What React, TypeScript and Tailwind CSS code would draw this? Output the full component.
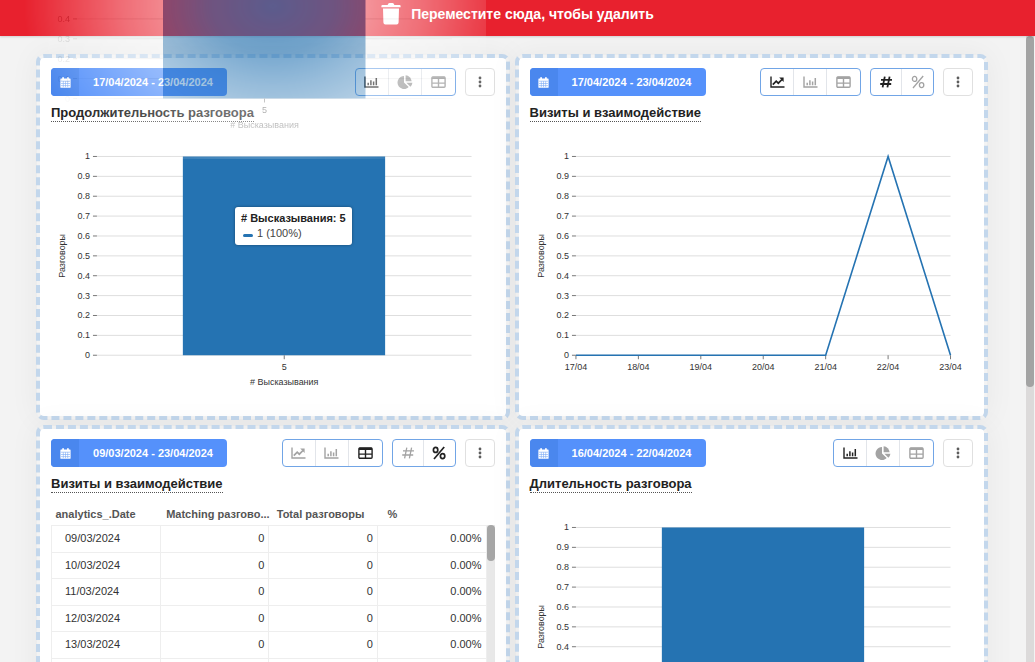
import React from "react";

type ViewKind = "line" | "bar" | "pie" | "table";
type Unit = "number" | "percent";

const LineIcon = () => (
  <svg viewBox="0 0 15 12" className="h-3 w-[15px]" fill="none" stroke="currentColor">
    <path d="M1 .5V11H14.5" strokeWidth="1.4" />
    <path d="M2.8 8.6 6.2 5.2 8.3 7.2 12 3.5" strokeWidth="1.7" />
    <path d="M9.2 1.6H13.6V6Z" fill="currentColor" stroke="none" />
  </svg>
);

const BarIcon = () => (
  <svg viewBox="0 0 15 12" className="h-3 w-[15px]" fill="none" stroke="currentColor">
    <path d="M1 .5V11H14.5" strokeWidth="1.4" />
    <path d="M4.2 9.2V6.8M6.9 9.2V4.2M9.6 9.2V5.4M12.3 9.2V2" strokeWidth="1.5" />
  </svg>
);

const PieIcon = () => (
  <svg viewBox="0 0 16 14" className="h-3.5 w-4" fill="currentColor">
    <path d="M7 1V7.5L11.7 12A6.5 6.5 0 1 1 7 1Z" />
    <path d="M8.6.3A6.3 6.3 0 0 1 14.6 6.3H8.6Z" />
    <path d="M9.4 7.8H15.4A6.3 6.3 0 0 1 13.4 11.8Z" />
  </svg>
);

const TableIcon = () => (
  <svg viewBox="0 0 15 12" className="h-3 w-[15px]" fill="none" stroke="currentColor">
    <rect x=".9" y=".9" width="13.2" height="10.4" rx="1" strokeWidth="1.4" />
    <path d="M1 1.8H14" strokeWidth="2.2" />
    <path d="M7.5 2V11M1 7.1H14" strokeWidth="1.4" />
  </svg>
);

const CalendarIcon = () => (
  <svg viewBox="0 0 11 11" className="h-[11px] w-[11px]">
    <path
      d="M1 1.6H2.2V.3H4V1.6H7V.3H8.8V1.6H10Q10.6 1.6 10.6 2.2V10.2Q10.6 10.8 10 10.8H1Q.4 10.8.4 10.2V2.2Q.4 1.6 1 1.6Z"
      fill="#fff"
    />
    <path d="M1 4.2H10M1 6.5H10M1 8.6H10M3.3 4.2V10.2M5.5 4.2V10.2M7.7 4.2V10.2" stroke="#7aa9f5" strokeWidth=".6" />
  </svg>
);

const HashIcon = ({ bold }: { bold: boolean }) => (
  <svg viewBox="0 0 14 14" className="h-3.5 w-3.5" fill="none" stroke="currentColor" strokeWidth={bold ? 1.8 : 1.3}>
    <path d="M5.8 1.6 3.6 12.4M10.6 1.6 8.4 12.4M2 4.8h11M1.2 9h11" />
  </svg>
);

const PercentIcon = ({ bold }: { bold: boolean }) => (
  <svg viewBox="0 0 14 14" className="h-3.5 w-3.5" fill="none" stroke="currentColor" strokeWidth={bold ? 1.7 : 1.3}>
    <ellipse cx="3.6" cy="3.9" rx="2.2" ry="2.5" />
    <ellipse cx="10.6" cy="10.1" rx="2.2" ry="2.5" />
    <path d="M12.2 1 2 13" />
  </svg>
);

const DotsIcon = () => (
  <svg viewBox="0 0 4 12" className="h-3 w-1" fill="currentColor">
    <circle cx="2" cy="2" r="1.4" />
    <circle cx="2" cy="6" r="1.4" />
    <circle cx="2" cy="10" r="1.4" />
  </svg>
);

const TrashIcon = () => (
  <svg viewBox="0 0 20 22" className="h-[22px] w-5" fill="currentColor">
    <path d="M1.4 2H6.6L7.4.6Q7.8 0 8.5 0h3Q12.2 0 12.6.6L13.4 2h5.2Q19.6 2 19.6 3v1.3H.4V3Q.4 2 1.4 2ZM2 5.4H18L17.6 19.5Q17.5 21.5 15.6 21.5H4.4Q2.5 21.5 2.4 19.5Z" />
  </svg>
);

const viewIcons: Record<ViewKind, { label: string; icon: React.ReactNode }> = {
  line: { label: "Линейный график", icon: <LineIcon /> },
  bar: { label: "Гистограмма", icon: <BarIcon /> },
  pie: { label: "Круговая диаграмма", icon: <PieIcon /> },
  table: { label: "Таблица", icon: <TableIcon /> },
};

const groupClass = "flex h-7 divide-x divide-[#e2e5ea] overflow-hidden rounded-[4px] border border-[#71a5e6] bg-white";

function ViewSwitch({ views, active }: { views: ViewKind[]; active: ViewKind }) {
  return (
    <div className={groupClass}>
      {views.map((v) => (
        <button
          key={v}
          aria-label={viewIcons[v].label}
          aria-pressed={v === active}
          className={
            v === active
              ? "flex w-[33px] items-center justify-center text-[#222]"
              : "flex w-[33px] items-center justify-center text-[#a3a3a3]"
          }
        >
          {viewIcons[v].icon}
        </button>
      ))}
    </div>
  );
}

function UnitSwitch({ active }: { active: Unit }) {
  return (
    <div className={groupClass}>
      <button
        aria-label="Количество"
        aria-pressed={active === "number"}
        className={
          active === "number"
            ? "flex w-[31px] items-center justify-center text-[#222]"
            : "flex w-[31px] items-center justify-center text-[#a3a3a3]"
        }
      >
        <HashIcon bold={active === "number"} />
      </button>
      <button
        aria-label="Проценты"
        aria-pressed={active === "percent"}
        className={
          active === "percent"
            ? "flex w-[31px] items-center justify-center text-[#222]"
            : "flex w-[31px] items-center justify-center text-[#a3a3a3]"
        }
      >
        <PercentIcon bold={active === "percent"} />
      </button>
    </div>
  );
}

type CardProps = {
  range: string;
  title: string;
  views: ViewKind[];
  active: ViewKind;
  unit?: Unit;
  children: React.ReactNode;
};

function Card({ range, title, views, active, unit, children }: CardProps) {
  return (
    <section className="flex h-[366px] min-w-0 flex-col rounded-lg border-4 border-dashed border-[#c3d7ec] bg-white bg-clip-padding px-[11px] pt-[10px] shadow-[0_0_30px_rgba(0,0,0,0.05)]">
      <header className="flex items-center gap-[9px]">
        <button className="flex h-7 w-44 overflow-hidden rounded-[4px] bg-[#5591fb] text-[11px] font-bold text-white">
          <span className="flex h-full w-7 items-center justify-center bg-[#4a87ee]">
            <CalendarIcon />
          </span>
          <span className="flex h-full flex-1 items-center justify-center whitespace-nowrap">{range}</span>
        </button>
        <div className="flex-1" />
        <ViewSwitch views={views} active={active} />
        {unit && <UnitSwitch active={unit} />}
        <button
          aria-label="Меню"
          className="flex h-7 w-[30px] items-center justify-center rounded-[4px] border border-[#e0e0e0] bg-white text-[#5c5c5c]"
        >
          <DotsIcon />
        </button>
      </header>
      <h2 className="mt-2 self-start border-b border-dotted border-[#555] text-[13px] leading-[17px] font-bold text-[#222]">
        {title}
      </h2>
      {children}
    </section>
  );
}

const TOP = 28.5;
const BASE = 227.5;
const LEFT = 46;
const RIGHT = 421;
const TICKS = [1, 0.9, 0.8, 0.7, 0.6, 0.5, 0.4, 0.3, 0.2, 0.1, 0];
const DAYS = ["17/04", "18/04", "19/04", "20/04", "21/04", "22/04", "23/04"];
const VISITS = [0, 0, 0, 0, 0, 1, 0];

const dayX = (i: number) => LEFT + ((RIGHT - LEFT) * i) / (DAYS.length - 1);
const valueY = (v: number) => BASE - (BASE - TOP) * v;

function Chart({ kind, labelsUpTo = 1 }: { kind: "bar" | "line"; labelsUpTo?: number }) {
  return (
    <svg viewBox="0 0 444 288" className="block w-full" fontSize="9" fill="#333" role="img">
      {TICKS.filter((t) => t <= labelsUpTo).map((t) => (
        <g key={t}>
          <path d={`M${LEFT} ${valueY(t)}H${RIGHT}`} stroke="#dedede" />
          <path d={`M${LEFT - 4} ${valueY(t)}h4`} stroke="#777" />
          <text x={LEFT - 7} y={valueY(t) + 3} textAnchor="end">
            {t}
          </text>
        </g>
      ))}
      {labelsUpTo === 1 && (
        <text transform="translate(14 128) rotate(-90)" textAnchor="middle">
          Разговоры
        </text>
      )}
      {kind === "bar" ? (
        <>
          <rect x="132" y={TOP} width="202.5" height={BASE - TOP} fill="#2573b2" />
          <path d={`M233.5 ${BASE}v4`} stroke="#777" />
          <text x="233.5" y="242" textAnchor="middle">
            5
          </text>
          <text x="233.5" y="257" textAnchor="middle">
            # Высказывания
          </text>
        </>
      ) : (
        <>
          {DAYS.map((d, i) => (
            <g key={d}>
              <path d={`M${dayX(i)} ${BASE}v4`} stroke="#777" />
              <text x={dayX(i)} y="242" textAnchor="middle">
                {d}
              </text>
            </g>
          ))}
          <polyline
            points={VISITS.map((v, i) => `${dayX(i)},${valueY(v)}`).join(" ")}
            fill="none"
            stroke="#2573b2"
            strokeWidth="1.6"
          />
        </>
      )}
    </svg>
  );
}

const ROWS = ["09/03/2024", "10/03/2024", "11/03/2024", "12/03/2024", "13/03/2024", "14/03/2024"];

function VisitsTable() {
  return (
    <div className="mt-[11px] flex text-[11px]">
      <table className="w-full flex-1 table-fixed border-collapse text-[#333]">
        <thead>
          <tr className="h-[21px] text-left text-[#555]">
            <th className="px-1">analytics_.Date</th>
            <th className="pl-1.5 whitespace-nowrap">Matching разгово...</th>
            <th className="pl-2 whitespace-nowrap">Total разговоры</th>
            <th className="pl-2.5">%</th>
          </tr>
        </thead>
        <tbody>
          {ROWS.map((d) => (
            <tr key={d} className="odd:h-[27px] even:h-[26px]">
              <td className="border border-[#eeeeee] pl-[13px]">{d}</td>
              <td className="border border-[#eeeeee] pr-1 text-right">0</td>
              <td className="border border-[#eeeeee] pr-1 text-right">0</td>
              <td className="border border-[#eeeeee] pr-1 text-right">0.00%</td>
            </tr>
          ))}
        </tbody>
      </table>
      <div className="mt-[21px] w-2 bg-[#e8e8e8]" aria-hidden="true">
        <div className="h-9 rounded-full bg-[#a6a6a6]" />
      </div>
    </div>
  );
}

export default function App() {
  return (
    <div className="relative flex h-screen flex-col overflow-hidden bg-[#f3f3f3] font-['Liberation_Sans',Arial,sans-serif]">
      <div className="relative flex h-9 shrink-0 justify-center gap-2.5 bg-[#e8212e] pt-[3px] text-white shadow-[0_1px_2px_rgba(0,0,0,0.15)]">
        <TrashIcon />
        <span className="text-[14px] leading-[23px] font-bold">Переместите сюда, чтобы удалить</span>
      </div>

      <div className="flex min-h-0 flex-1">
        <main className="grid min-w-0 flex-1 grid-cols-2 content-start gap-[5px] overflow-hidden pt-[18px] pr-[38px] pl-9">
          <Card range="17/04/2024 - 23/04/2024" title="Продолжительность разговора" views={["bar", "pie", "table"]} active="bar">
            <div className="relative mt-1.5">
              <Chart kind="bar" />
              <div className="absolute top-[79px] left-[184px] rounded-[3px] bg-white px-1.5 py-1 text-[11px] leading-[15px] whitespace-nowrap text-[#444] shadow-[0_0_3px_rgba(0,0,0,0.4)]">
                <div className="font-bold text-[#222]"># Высказывания: 5</div>
                <div className="flex items-center gap-1 pl-0.5">
                  <span className="mt-1 h-[3px] w-2.5 rounded-full bg-[#2573b2]" />
                  <span>1 (100%)</span>
                </div>
              </div>
            </div>
          </Card>
          <Card
            range="17/04/2024 - 23/04/2024"
            title="Визиты и взаимодействие"
            views={["line", "bar", "table"]}
            active="line"
            unit="number"
          >
            <div className="mt-1.5">
              <Chart kind="line" />
            </div>
          </Card>
          <Card
            range="09/03/2024 - 23/04/2024"
            title="Визиты и взаимодействие"
            views={["line", "bar", "table"]}
            active="table"
            unit="percent"
          >
            <VisitsTable />
          </Card>
          <Card range="16/04/2024 - 22/04/2024" title="Длительность разговора" views={["bar", "pie", "table"]} active="bar">
            <div className="mt-1.5">
              <Chart kind="bar" />
            </div>
          </Card>
        </main>
        <div className="mr-px w-2 shrink-0 bg-[#dcdada]" aria-hidden="true">
          <div className="h-[351px] rounded-full bg-[#a3a3a3]" />
        </div>
      </div>

      {/* Translucent copy of the dragged card, fading away from the pointer */}
      <div
        aria-hidden="true"
        className="pointer-events-none absolute top-0 left-5 flex h-[159px] w-[466px] items-end overflow-hidden bg-white px-[11px] [mask-image:radial-gradient(250px_190px_at_253px_6px,rgba(0,0,0,0.72)_0%,rgba(0,0,0,0.62)_25%,rgba(0,0,0,0.48)_42%,rgba(0,0,0,0.35)_60%,rgba(0,0,0,0.17)_80%,transparent_100%)]"
      >
        <div className="w-full">
          <Chart kind="bar" labelsUpTo={0.4} />
        </div>
      </div>
    </div>
  );
}
